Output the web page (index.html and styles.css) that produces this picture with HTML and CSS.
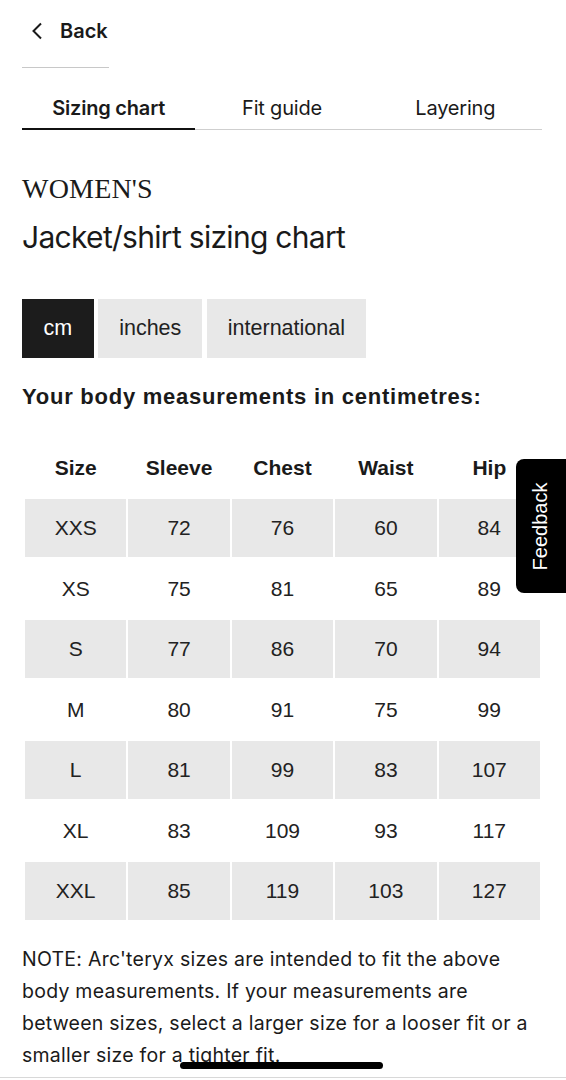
FILE: index.html
```html
<!DOCTYPE html>
<html lang="en">
<head>
<meta charset="utf-8">
<title>Sizing chart</title>
<link rel="stylesheet" href="styles.css">
</head>
<body>
<div class="page">
  <div class="back-row">
    <svg class="chev" width="12" height="18" viewBox="0 0 12 18"><path d="M10 1.5 L2.5 9 L10 16.5" fill="none" stroke="#1a1a1a" stroke-width="2"/></svg>
    <span class="back-label">Back</span>
  </div>
  <div class="back-divider"></div>

  <div class="tabs">
    <div class="tab active">Sizing chart</div>
    <div class="tab">Fit guide</div>
    <div class="tab">Layering</div>
  </div>

  <h1 class="gender">WOMEN'S</h1>
  <h2 class="chart-title">Jacket/shirt sizing chart</h2>

  <div class="units">
    <div class="unit active">cm</div>
    <div class="unit">inches</div>
    <div class="unit">international</div>
  </div>

  <p class="measure-label">Your body measurements in centimetres:</p>

  <div class="grid">
    <div class="hd">Size</div><div class="hd">Sleeve</div><div class="hd">Chest</div><div class="hd">Waist</div><div class="hd">Hip</div>
    <div class="c s">XXS</div><div class="c s">72</div><div class="c s">76</div><div class="c s">60</div><div class="c s">84</div>
    <div class="c">XS</div><div class="c">75</div><div class="c">81</div><div class="c">65</div><div class="c">89</div>
    <div class="c s">S</div><div class="c s">77</div><div class="c s">86</div><div class="c s">70</div><div class="c s">94</div>
    <div class="c">M</div><div class="c">80</div><div class="c">91</div><div class="c">75</div><div class="c">99</div>
    <div class="c s">L</div><div class="c s">81</div><div class="c s">99</div><div class="c s">83</div><div class="c s">107</div>
    <div class="c">XL</div><div class="c">83</div><div class="c">109</div><div class="c">93</div><div class="c">117</div>
    <div class="c s">XXL</div><div class="c s">85</div><div class="c s">119</div><div class="c s">103</div><div class="c s">127</div>
  </div>

  <p class="note">NOTE: Arc'teryx sizes are intended to fit the above body measurements. If your measurements are between sizes, select a larger size for a looser fit or a smaller size for a <span class="ul">tighter fit.</span></p>
</div>

<div class="feedback"><span>Feedback</span></div>
<div class="home-bar"></div>
<div class="bottom-line"></div>
</body>
</html>
```
FILE: styles.css
```css
html, body {
  margin: 0;
  padding: 0;
  background: #fff;
  color: #1a1a1a;
  font-family: Inter, "Liberation Sans", sans-serif;
}
.page {
  padding: 0 24px 0 22px;
  width: 520px;
}
.back-row {
  display: flex;
  align-items: center;
  height: 30px;
  padding-top: 16px;
  padding-left: 9px;
  gap: 17px;
}
.chev { display: block; }
.back-label {
  font-size: 20px;
  font-weight: 600;
}
.back-divider {
  width: 87px;
  height: 1px;
  background: #c8c8c8;
  margin-top: 21px;
}
.tabs {
  display: grid;
  grid-template-columns: repeat(3, 1fr);
  margin-top: 19px;
  border-bottom: 1px solid #cfcfcf;
}
.tab {
  text-align: center;
  font-size: 20px;
  height: 41px;
  line-height: 42px;
  letter-spacing: -0.2px;
}
.tab.active {
  font-weight: 600;
  border-bottom: 2px solid #111;
  margin-bottom: -1px;
}
.gender {
  font-family: "Liberation Serif", serif;
  font-weight: 400;
  font-size: 28px;
  margin: 43px 0 0;
  line-height: 32px;
  letter-spacing: 0.2px;
}
.chart-title {
  font-weight: 400;
  font-size: 30px;
  line-height: 40px;
  letter-spacing: -0.7px;
  margin: 12px 0 0;
}
.units {
  display: flex;
  gap: 4.5px;
  margin-top: 42px;
}
.unit {
  font-family: "Liberation Sans", Arial, sans-serif;
  font-size: 21.5px;
  background: #e8e8e8;
  color: #222;
  height: 59px;
  line-height: 59px;
  padding: 0 21px;
}
.unit.active {
  background: #1c1c1c;
  color: #fff;
  padding: 0 21.5px;
}
.measure-label {
  font-family: "Liberation Sans", Arial, sans-serif;
  font-weight: 700;
  font-size: 22px;
  letter-spacing: 0.75px;
  margin: 27px 0 0;
  line-height: 24px;
}
.grid {
  display: grid;
  grid-template-columns: repeat(5, 1fr);
  gap: 2.5px 2px;
  margin: 29.5px 0 0 3px;
  width: 515px;
  font-family: "Liberation Sans", Arial, sans-serif;
  font-size: 21px;
}
.hd, .c {
  height: 58px;
  display: flex;
  align-items: center;
  justify-content: center;
}
.hd { font-weight: 700; }
.c { color: #222; }
.c.s { background: #e8e8e8; }
.note {
  font-size: 19.5px;
  line-height: 32px;
  letter-spacing: 0.25px;
  margin: 22.5px 0 0;
}
.ul { text-decoration: underline; }
.feedback {
  position: absolute;
  left: 516px;
  top: 459px;
  width: 50px;
  height: 134px;
  background: #000;
  border-radius: 8px 0 0 8px;
  display: flex;
  align-items: center;
  justify-content: center;
}
.feedback span {
  color: #fff;
  font-family: "Liberation Sans", Arial, sans-serif;
  font-size: 20px;
  transform: rotate(-90deg);
  white-space: nowrap;
}
.home-bar {
  position: absolute;
  left: 180px;
  top: 1062px;
  width: 203px;
  height: 7px;
  border-radius: 4px;
  background: #000;
}
.bottom-line {
  position: absolute;
  left: 0;
  top: 1077px;
  width: 566px;
  height: 1px;
  background: #d8d8d8;
}
```
